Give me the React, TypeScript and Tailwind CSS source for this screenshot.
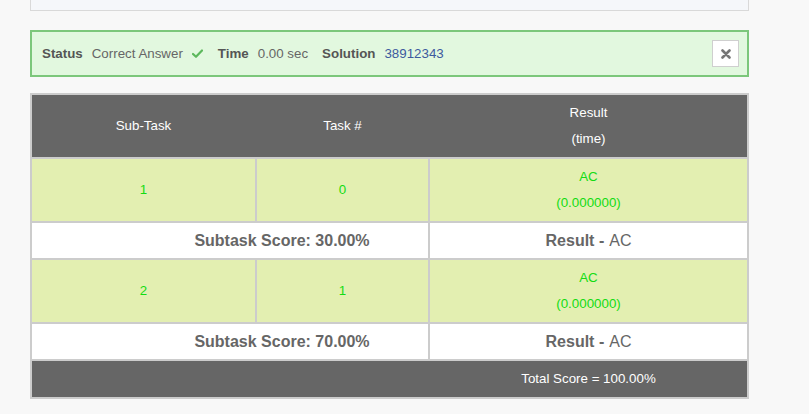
import React from "react";

const rowBg = "bg-[#e3efb1]";
const green = "text-[#13dc13]";

function DataRow({ sub, task }: { sub: string; task: string }) {
  return (
    <>
      <div className={`${rowBg} ${green} h-[62px] flex items-center justify-center text-[13.33px]`}>{sub}</div>
      <div className={`${rowBg} ${green} h-[62px] flex items-center justify-center text-[13.33px]`}>{task}</div>
      <div className={`${rowBg} ${green} h-[62px] flex flex-col items-center justify-center text-[13.33px] leading-[26px]`}>
        <span>AC</span>
        <span>(0.000000)</span>
      </div>
    </>
  );
}

function SubRow({ score }: { score: string }) {
  return (
    <>
      <div className="col-span-2 bg-white h-[35px] flex items-center justify-center pl-[104px] text-[16px] font-bold text-[#666]">
        Subtask Score: {score}
      </div>
      <div className="bg-white h-[35px] flex items-center justify-center text-[16px] text-[#666]">
        <span className="font-bold">Result -</span>
        <span className="ml-[5px]">AC</span>
      </div>
    </>
  );
}

export default function App() {
  return (
    <div
      className="w-[809px] h-[414px] bg-[#f8f8f8] overflow-hidden"
      style={{ fontFamily: '"Liberation Sans", Arial, sans-serif' }}
    >
      <div className="ml-[30px] w-[719px]">
        <div className="h-[11px] bg-[#f5f7fa] border-x border-b border-[#d9d9d9]" />

        <div className="mt-[19px] h-[47px] bg-[#e2f8df] border-2 border-[#7cc77b] flex items-center pl-[10px] pr-[8px] text-[13.33px]">
          <span className="font-bold text-[#555]">Status</span>
          <span className="ml-[9px] text-[#666]">Correct Answer</span>
          <svg className="ml-[9px]" width="11" height="9" viewBox="0 0 11 9">
            <path d="M1 5 L4 7.8 L10 1.5" fill="none" stroke="#5cb85c" strokeWidth="2.2" strokeLinecap="round" strokeLinejoin="round" />
          </svg>
          <span className="ml-[15px] font-bold text-[#555]">Time</span>
          <span className="ml-[9px] text-[#666]">0.00 sec</span>
          <span className="ml-[14px] font-bold text-[#555]">Solution</span>
          <span className="ml-[9px] text-[#3d5a9e]">38912343</span>
          <div className="ml-auto w-[27px] h-[27px] bg-white border border-[#cfcfcf] flex items-center justify-center">
            <svg width="10" height="10" viewBox="0 0 10 10">
              <path d="M1.5 1.5 L8.5 8.5 M8.5 1.5 L1.5 8.5" stroke="#777" strokeWidth="2.6" strokeLinecap="round" />
            </svg>
          </div>
        </div>

        <div className="mt-[16px] bg-[#cccccc] p-[2px] grid grid-cols-[223px_171px_317px] gap-[2px]">
          <div className="col-span-3 bg-[#666666] grid grid-cols-[223px_171px_317px] gap-[2px] h-[62px] text-white text-[13.33px]">
            <div className="flex items-center justify-center">Sub-Task</div>
            <div className="flex items-center justify-center">Task #</div>
            <div className="flex flex-col items-center justify-center leading-[26px]">
              <span>Result</span>
              <span>(time)</span>
            </div>
          </div>
          <DataRow sub="1" task="0" />
          <SubRow score="30.00%" />
          <DataRow sub="2" task="1" />
          <SubRow score="70.00%" />
          <div className="col-span-3 bg-[#666666] grid grid-cols-[223px_171px_317px] gap-[2px] h-[36px] text-white text-[13.33px]">
            <div className="col-span-2" />
            <div className="flex items-center justify-center">Total Score = 100.00%</div>
          </div>
        </div>
      </div>
    </div>
  );
}
